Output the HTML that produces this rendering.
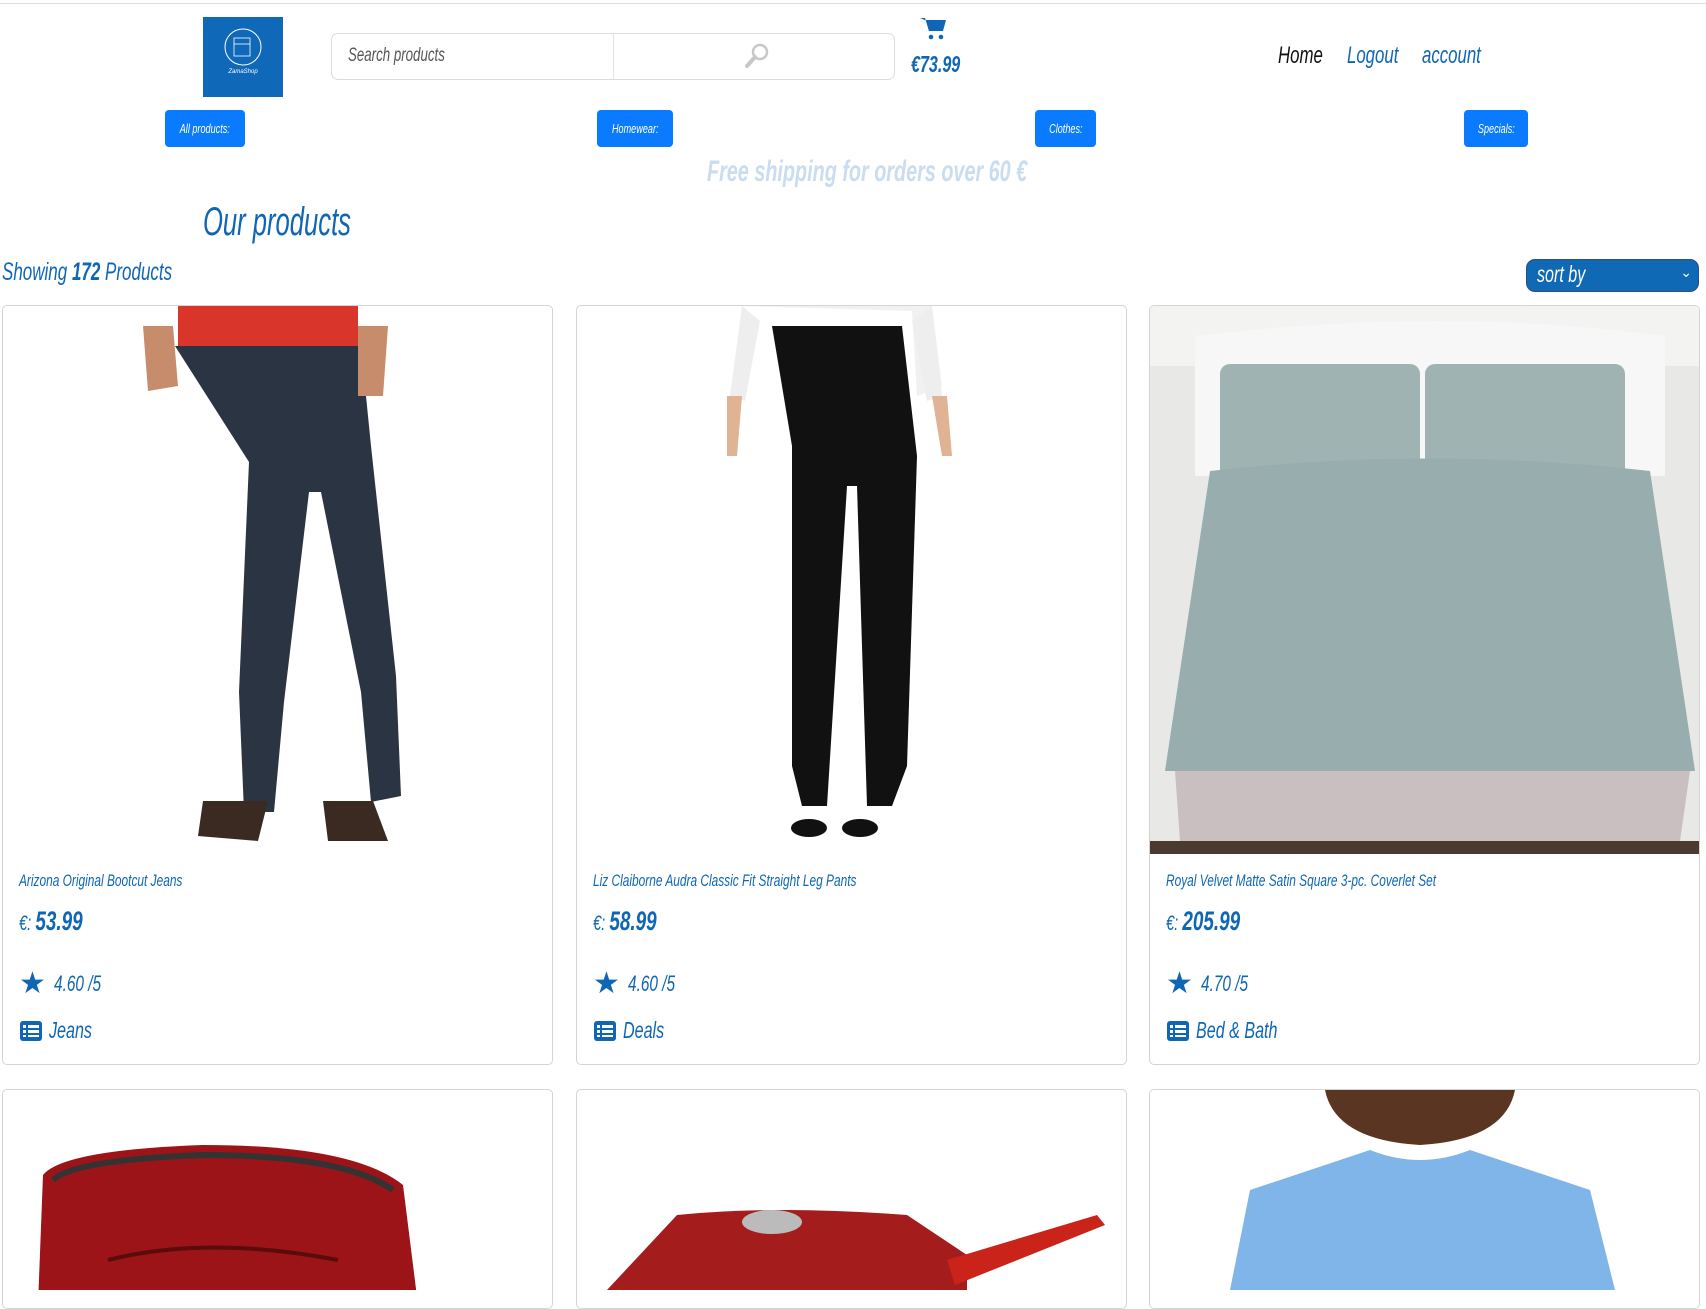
<!DOCTYPE html>
<html><head><meta charset="utf-8"><style>
*{box-sizing:border-box;margin:0;padding:0}
body{width:1706px;height:1284px;overflow:hidden;background:#fff;font-family:"Liberation Sans",sans-serif;font-style:italic;color:#0f66b4;position:relative}
.a{position:absolute;white-space:nowrap}
.s{display:inline-block;transform:scaleX(.7);transform-origin:left center}
.topline{left:0;top:3px;width:1706px;height:1px;background:#ddd}
.logo{left:203px;top:17px;width:80px;height:80px;background:#0f69b8}
.search{left:331px;top:33px;width:564px;height:47px;border:1px solid #dcdcdc;border-radius:7px}
.search .div{position:absolute;left:281px;top:0;width:1px;height:45px;background:#e3e3e3}
.btn{top:110px;height:37px;background:#0a7bff;border-radius:4px;color:#fff;font-size:13px;display:flex;align-items:center;justify-content:center}
.btn span{display:inline-block;transform:scaleX(.7)}
.card{width:551px;border:1px solid #d4d4d4;border-radius:5px;overflow:hidden;background:#fff}
.img{position:absolute;left:0;top:0;width:100%;height:548px;overflow:hidden}
.t{font-size:17px;left:16px;top:565px}
.p{font-size:21px;left:16px;top:600px}
.p b{font-size:27px}
.r{font-size:22px;left:16px;top:660px;display:flex;align-items:center;gap:8px}
.c{font-size:23px;left:16px;top:711px;display:flex;align-items:center;gap:6px}
</style></head><body>
<div class="a topline"></div>
<div class="a logo"><svg width="80" height="80"><circle cx="40" cy="30" r="18" fill="none" stroke="#fff" stroke-width="1"/><rect x="31" y="21" width="16" height="18" fill="none" stroke="#fff" stroke-width=".8"/><line x1="31" y1="27" x2="47" y2="27" stroke="#fff" stroke-width=".8"/><text x="40" y="56" font-size="6" fill="#fff" text-anchor="middle" font-family="Liberation Sans">ZamaShop</text></svg></div>
<div class="a search"><div class="div"></div><span class="a" style="left:16px;top:11px;font-size:19px;color:#555"><span class="s">Search products</span></span>
<svg class="a" style="left:410px;top:7px" width="30" height="30" viewBox="0 0 30 30"><circle cx="18" cy="11" r="7" fill="none" stroke="#c8c8c8" stroke-width="2.5"/><line x1="13" y1="16" x2="5" y2="25" stroke="#c8c8c8" stroke-width="4" stroke-linecap="round"/></svg></div>
<svg class="a" style="left:919px;top:16px" width="28" height="26" viewBox="0 0 28 26"><path d="M1 2h5l4 13h13l3-10H8" fill="#0f66b4"/><path d="M7 4h20l-3 11H10z" fill="#0f66b4"/><circle cx="12" cy="21" r="2.3" fill="#0f66b4"/><circle cx="22" cy="21" r="2.3" fill="#0f66b4"/></svg>
<div class="a" style="left:911px;top:51px;font-size:23px;font-weight:bold"><span class="s">€73.99</span></div>
<div class="a" style="left:1278px;top:42px;font-size:24px;color:#111"><span class="s">Home</span></div>
<div class="a" style="left:1347px;top:42px;font-size:24px"><span class="s">Logout</span></div>
<div class="a" style="left:1422px;top:42px;font-size:24px"><span class="s">account</span></div>
<div class="a btn" style="left:165px;width:80px"><span>All products:</span></div>
<div class="a btn" style="left:597px;width:76px"><span>Homewear:</span></div>
<div class="a btn" style="left:1035px;width:61px"><span>Clothes:</span></div>
<div class="a btn" style="left:1464px;width:64px"><span>Specials:</span></div>
<div class="a" style="left:707px;top:155px;font-size:30px;font-weight:bold;color:#c9dcf0"><span class="s" style="transform:scaleX(.66)">Free shipping for orders over 60 €</span></div>
<div class="a" style="left:203px;top:200px;font-size:40px"><span class="s" style="transform:scaleX(.64)">Our products</span></div>
<div class="a" style="left:2px;top:258px;font-size:25px"><span class="s" style="transform:scaleX(.68)">Showing <b>172</b> Products</span></div>
<div class="a" style="left:1526px;top:259px;width:173px;height:33px;background:#0f69b4;border:1px solid #2a4f80;border-radius:9px;color:#fff;font-size:23px;padding:1px 10px"><span class="s">sort by</span><span style="position:absolute;right:6px;top:4px;font-size:14px;font-style:normal">⌄</span></div>

<div class="a card" style="left:2px;top:305px;height:760px">
<div class="img"><svg width="551" height="548"><rect x="175" y="0" width="180" height="45" fill="#d9352b"/><path d="M172 40h186l10 100 25 230 5 120 -30 6 -10-110-40-200-12 0-25 210-10 110-30 0 -5-120 10-230z" fill="#2b3442"/><path d="M200 495l-5 35 60 5 10-40z M320 495l5 40 60 0 -15-40z" fill="#3b2a22"/><path d="M140 20l30 0 5 60-30 5z M355 20l30 0 -5 70-25 0z" fill="#c78c6c"/></svg></div>
<div class="a t"><span class="s">Arizona Original Bootcut Jeans</span></div>
<div class="a p"><span class="s">€: <b>53.99</b></span></div>
<div class="a r"><span style="font-size:30px;font-style:normal">★</span><span class="s">4.60 /5</span></div>
<div class="a c"><svg width="24" height="22"><rect x="1" y="1" width="22" height="20" rx="3" fill="#0f66b4"/><g fill="#fff"><rect x="4" y="5" width="3" height="3"/><rect x="4" y="10" width="3" height="3"/><rect x="4" y="15" width="3" height="2"/><rect x="9" y="5" width="11" height="3"/><rect x="9" y="10" width="11" height="3"/><rect x="9" y="15" width="11" height="2"/></g></svg><span class="s">Jeans</span></div>
</div>

<div class="a card" style="left:576px;top:305px;height:760px">
<div class="img"><svg width="551" height="548"><path d="M165 0h190l10 80-25 10-5-85z" fill="#f1f1f1"/><path d="M165 0l-12 90 15 5 15-80z M355 0l10 90-15 5-15-80z" fill="#eee"/><path d="M195 20h130l15 130-10 310-15 40-25 0-10-320-10 0-20 320-25 0-10-40 0-320z" fill="#111"/><ellipse cx="232" cy="522" rx="18" ry="9" fill="#111"/><ellipse cx="283" cy="522" rx="18" ry="9" fill="#111"/><path d="M150 90l15 0 -5 60-10 0z M355 90l15 0 5 60-10 0z" fill="#e0b394"/></svg></div>
<div class="a t"><span class="s">Liz Claiborne Audra Classic Fit Straight Leg Pants</span></div>
<div class="a p"><span class="s">€: <b>58.99</b></span></div>
<div class="a r"><span style="font-size:30px;font-style:normal">★</span><span class="s">4.60 /5</span></div>
<div class="a c"><svg width="24" height="22"><rect x="1" y="1" width="22" height="20" rx="3" fill="#0f66b4"/><g fill="#fff"><rect x="4" y="5" width="3" height="3"/><rect x="4" y="10" width="3" height="3"/><rect x="4" y="15" width="3" height="2"/><rect x="9" y="5" width="11" height="3"/><rect x="9" y="10" width="11" height="3"/><rect x="9" y="15" width="11" height="2"/></g></svg><span class="s">Deals</span></div>
</div>

<div class="a card" style="left:1149px;top:305px;height:760px">
<div class="img"><svg width="551" height="548"><rect width="551" height="548" fill="#e8e8e6"/><rect x="0" y="0" width="551" height="60" fill="#f3f3f1"/><path d="M45 30q250-30 470 0l0 140-470 0z" fill="#f7f7f7"/><rect x="70" y="58" width="200" height="120" rx="10" fill="#9fb3b3"/><rect x="275" y="58" width="200" height="120" rx="10" fill="#9fb3b3"/><path d="M60 165q220-25 440 0l45 300-530 0z" fill="#98adad"/><path d="M25 465h515l-10 70-500 0z" fill="#c9bfc0"/><rect x="0" y="535" width="551" height="13" fill="#4a3a30"/></svg></div>
<div class="a t"><span class="s">Royal Velvet Matte Satin Square 3-pc. Coverlet Set</span></div>
<div class="a p"><span class="s">€: <b>205.99</b></span></div>
<div class="a r"><span style="font-size:30px;font-style:normal">★</span><span class="s">4.70 /5</span></div>
<div class="a c"><svg width="24" height="22"><rect x="1" y="1" width="22" height="20" rx="3" fill="#0f66b4"/><g fill="#fff"><rect x="4" y="5" width="3" height="3"/><rect x="4" y="10" width="3" height="3"/><rect x="4" y="15" width="3" height="2"/><rect x="9" y="5" width="11" height="3"/><rect x="9" y="10" width="11" height="3"/><rect x="9" y="15" width="11" height="2"/></g></svg><span class="s">Bed &amp; Bath</span></div>
</div>

<div class="a card" style="left:2px;top:1089px;height:220px">
<svg width="551" height="200"><path d="M40 85q20-25 160-30q150 0 200 40l15 120-380 0z" fill="#9c1418"/><path d="M50 90q20-20 150-25q140 0 190 35" fill="none" stroke="#333" stroke-width="6"/><path d="M105 170q100-25 230 0" fill="none" stroke="#5a0b0c" stroke-width="4"/></svg></div>
<div class="a card" style="left:576px;top:1089px;height:220px">
<svg width="551" height="200"><path d="M30 200l70-75q100-10 230 0l60 40 0 35z" fill="#a51c1c"/><ellipse cx="195" cy="132" rx="30" ry="12" fill="#bbb"/><path d="M370 170l150-45 8 10-150 60z" fill="#c9231a"/></svg></div>
<div class="a card" style="left:1149px;top:1089px;height:220px">
<svg width="551" height="200"><path d="M175 0h190q-10 50-95 55q-85-5-95-55z" fill="#5a3522"/><path d="M80 200l20-100 120-40q50 20 100 0l120 40 25 100z" fill="#7fb5e8"/></svg></div>
</body></html>
